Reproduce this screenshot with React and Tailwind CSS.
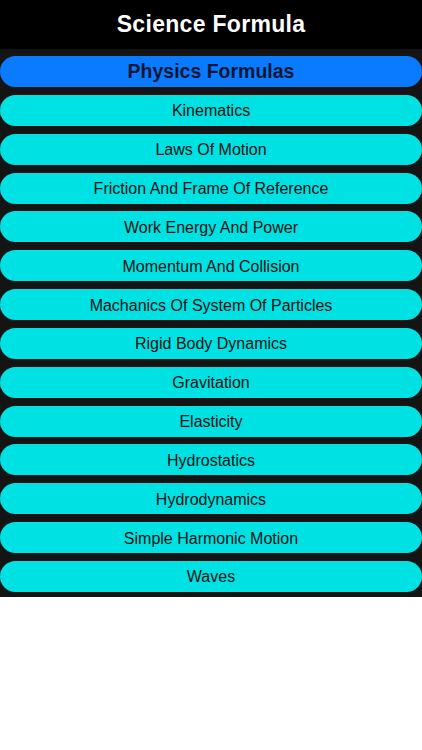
const topics = [
  'Kinematics',
  'Laws Of Motion',
  'Friction And Frame Of Reference',
  'Work Energy And Power',
  'Momentum And Collision',
  'Machanics Of System Of Particles',
  'Rigid Body Dynamics',
  'Gravitation',
  'Elasticity',
  'Hydrostatics',
  'Hydrodynamics',
  'Simple Harmonic Motion',
  'Waves',
];

export default function App() {
  return (
    <div className="w-[422px] h-[750px] bg-white" style={{ fontFamily: '"Liberation Sans", Arial, sans-serif' }}>
      {/* Header */}
      <div className="h-[49px] bg-black flex items-center justify-center">
        <h1 className="text-white font-bold text-[23px] tracking-[0.3px]">Science Formula</h1>
      </div>

      {/* List */}
      <div className="bg-[#141414] pt-[7px] pb-[5px] flex flex-col gap-[7.85px]">
        <div className="h-[31px] rounded-full bg-[#0a7bff] flex items-center justify-center pt-[1px]">
          <span className="text-[#0b1733] font-bold text-[19.5px]">Physics Formulas</span>
        </div>
        {topics.map((t) => (
          <div key={t} className="h-[31px] rounded-full bg-[#00e1e3] flex items-center justify-center pt-[2px]">
            <span className="text-[#111] text-[16px]">{t}</span>
          </div>
        ))}
      </div>
    </div>
  );
}
